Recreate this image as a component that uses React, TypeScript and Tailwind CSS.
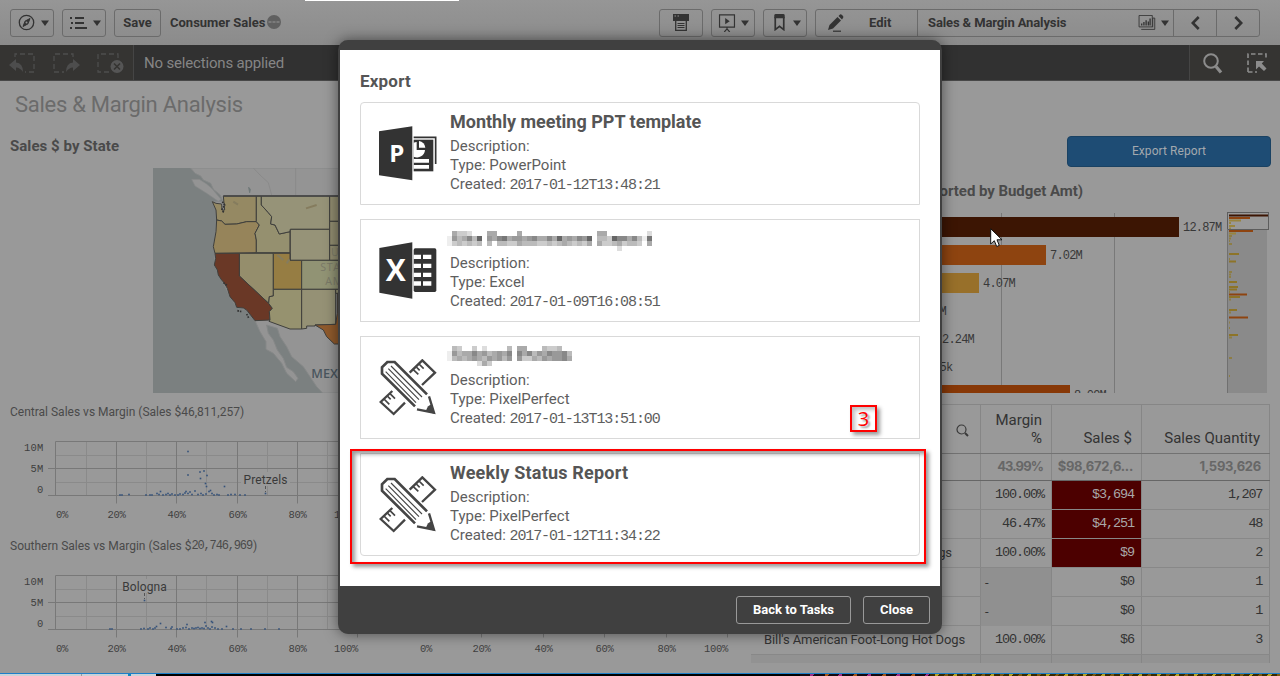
import React from "react";

const Caret = () => (
  <svg width="8" height="6" viewBox="0 0 8 6" className="shrink-0">
    <path d="M0 0.5H8L4 6Z" fill="#333" />
  </svg>
);

function ToolButton({ children, className = "" }: { children: React.ReactNode; className?: string }) {
  return (
    <button className={"flex h-7 shrink-0 items-center rounded-[3px] border border-[#6b6b6b] " + className}>
      {children}
    </button>
  );
}

function Toolbar() {
  return (
    <header className="flex h-[45px] shrink-0 items-center bg-linear-to-b from-[#969696] to-[#8b8b8b] pl-[10px] text-[13px] font-bold text-[#333]">
      <ToolButton className="w-11 gap-[6px] pl-[7px]">
        <svg width="17" height="17" viewBox="0 0 17 17" fill="none" stroke="#333">
          <circle cx="8.5" cy="8.5" r="7.2" strokeWidth="1.3" />
          <path d="M12 4.5L9.9 9.9L5 12.5L7.1 7.1Z" fill="#333" />
          <circle cx="8.5" cy="8.5" r="1" fill="#909090" stroke="none" />
        </svg>
        <Caret />
      </ToolButton>
      <ToolButton className="ml-2 w-11 gap-[6px] pl-[7px]">
        <svg width="17" height="12" viewBox="0 0 17 12" fill="#333">
          <path d="M0 0h2v2H0zM5 0h9v2H5zM1 5h2v2H1zM5 5h9v2H5zM0 10h2v2H0zM5 10h12v2H5z" />
        </svg>
        <Caret />
      </ToolButton>
      <ToolButton className="ml-2 w-[47px] justify-center">
        <span>Save</span>
      </ToolButton>
      <span className="ml-[9px] whitespace-nowrap">Consumer Sales</span>
      <svg width="14" height="14" viewBox="0 0 14 14" className="-mt-[2px] ml-[2px]">
        <circle cx="7" cy="7" r="7" fill="#606060" />
        <path d="M1.500 7H12.500" stroke="#969696" strokeWidth="1.200" strokeDasharray="3 1" />
      </svg>

      <div className="ml-auto flex items-center gap-2 pr-5">
        <ToolButton className="w-11 justify-center">
          <svg width="16" height="17" viewBox="0 0 16 17" fill="#333">
            <path d="M0 0H16V7H0Z" />
            <path d="M1.500 2h1.500M4.500 2h1.500" stroke="#909090" />
            <path d="M2.700 7V16.300H13.300V7" fill="none" stroke="#333" strokeWidth="1.300" />
            <path d="M4.500 9.500h7M4.500 11.500h7M4.500 13.500h7" stroke="#333" />
          </svg>
        </ToolButton>
        <ToolButton className="w-11 gap-[5px] pl-[6px]">
          <svg width="18" height="18" viewBox="0 0 18 20" fill="none" stroke="#333" strokeWidth="1.300">
            <path d="M0.700 1H17.300V14.500H0.700ZM9 14.500V17M9 16.500L6 20M9 16.500L12 20" />
            <path d="M7 4.500L12 8L7 11.500Z" fill="#333" stroke="none" />
          </svg>
          <Caret />
        </ToolButton>
        <ToolButton className="w-11 gap-[8px] pl-[10px]">
          <svg width="11" height="17" viewBox="0 0 11 18" fill="none" stroke="#333">
            <path d="M1 3V16.500L5.500 13L10 16.500V3" strokeWidth="1.800" />
            <path d="M0 4.500V1.500Q0 0 1.500 0H9.500Q11 0 11 1.500V4.500Z" fill="#333" stroke="none" />
          </svg>
          <Caret />
        </ToolButton>
        <div className="flex h-7 w-[445px] items-center rounded-[3px] border border-[#6b6b6b]">
          <div className="flex h-full w-[102px] items-center border-r border-[#6b6b6b] pl-[11px]">
            <svg width="17" height="18" viewBox="0 0 17 18" fill="#333">
              <path d="M10.500 3L14 6.500L6 14.500L1 16L2.500 11Z" />
              <path d="M11.500 2L13 0.500Q14 0 15 1L16 2Q16.800 3 16 4L15 5.500Z" />
              <path d="M6 17.200h8" stroke="#333" strokeWidth="1.200" />
            </svg>
            <span className="ml-[25px]">Edit</span>
          </div>
          <div className="flex h-full w-[256px] items-center border-r border-[#6b6b6b] pl-[10px]">
            <span className="whitespace-nowrap tracking-[-0.12px]">Sales &amp; Margin Analysis</span>
            <svg width="18" height="15" viewBox="0 0 19 17" fill="none" stroke="#333" className="ml-auto">
              <path d="M0.500 0.500H15.500V13.500H0.500ZM3 16.300H18.300V3.500H16M16 3.500V14" />
              <path d="M3.500 9.500V12M6 8V12M8.500 6V12M11 7.500V12M13 4V12" strokeWidth="1.500" />
            </svg>
            <span className="mr-[4px] ml-[5px]">
              <Caret />
            </span>
          </div>
          <div className="flex h-full w-[43px] items-center justify-center border-r border-[#6b6b6b]">
            <svg width="9" height="14" viewBox="0 0 9 14" fill="none" stroke="#333" strokeWidth="2.600">
              <path d="M7.700 1L1.800 7L7.700 13" />
            </svg>
          </div>
          <div className="flex h-full flex-1 items-center justify-center">
            <svg width="9" height="14" viewBox="0 0 9 14" fill="none" stroke="#333" strokeWidth="2.600">
              <path d="M1.300 1L7.200 7L1.300 13" />
            </svg>
          </div>
        </div>
      </div>
    </header>
  );
}

function SelectionBar() {
  return (
    <div className="flex h-9 shrink-0 border-b border-[#484848] bg-[#313131]">
      <div className="flex w-[134px] items-center gap-[17px] border-r border-[#454545] bg-[#353432] pl-[9px]">
        <svg width="27" height="22" viewBox="0 0 27 22" fill="none" stroke="#4d4d4d" strokeWidth="1.300">
          <path d="M6 5V2H25V20H16" strokeDasharray="5 3" />
          <path d="M0 13L7 7V10.500Q14 11 14 20Q11 15.500 7 15.500V19Z" fill="#4d4d4d" stroke="none" />
        </svg>
        <svg width="27" height="22" viewBox="0 0 27 22" fill="none" stroke="#4d4d4d" strokeWidth="1.300">
          <path d="M20 5V2H1V20H11" strokeDasharray="5 3" />
          <path d="M27 13L20 7V10.500Q13 11 13 20Q16 15.500 20 15.500V19Z" fill="#4d4d4d" stroke="none" />
        </svg>
        <svg width="27" height="22" viewBox="0 0 27 22" fill="none" stroke="#4d4d4d" strokeWidth="1.300">
          <path d="M21 6V2H1V20H12" strokeDasharray="5 3" />
          <circle cx="20" cy="14.500" r="6.500" fill="#555" stroke="none" />
          <path d="M17 11.500L23 17.500M23 11.500L17 17.500" stroke="#353432" strokeWidth="1.600" />
        </svg>
      </div>
      <span className="ml-[10px] self-center pt-[2px] text-[15px] tracking-[-0.17px] text-[#858585]">No selections applied</span>
      <div className="ml-auto flex w-[91px] items-center border-l border-[#454545] bg-[#353432] pl-[12px]">
        <svg width="22" height="22" viewBox="0 0 22 22" fill="none" stroke="#8c8c8c">
          <circle cx="9" cy="9" r="6.800" strokeWidth="2" />
          <path d="M14 14.500L19 20.500" strokeWidth="3.200" />
        </svg>
        <svg width="20" height="20" viewBox="0 0 20 20" className="ml-[23px]" fill="none" stroke="#8c8c8c" strokeWidth="1.600">
          <path d="M1 19V1H19V7M1 19H10" strokeDasharray="4.500 2.500" />
          <path d="M9 8H17L14.800 10.500L19.500 15.500L17 18L12 13.500L9 16.500Z" fill="#8c8c8c" stroke="none" />
        </svg>
      </div>
    </div>
  );
}

const westCoast = "L228 215L220 260L225 280";
const caCoast = "L320 450L310 444L290 442L285 428L270 410L262 385L252 368L245 360L235 345L232 330L223 315L227 295Z";
const idMt = "L364 135L385 158L395 170L392 192L405 195L418 222";
const states: { id: string; d: string; fill: string }[] = [
  { id: "WA", d: "M217 125L228 130L245 132L246 150L254 150L250 108H349V185L320 185L290 192L255 193L245 183L230 180L228 150Z", fill: "#958963" },
  { id: "OR", d: "M230 180L245 183L255 193L290 192L320 185L349 185L358 195L345 220L349 240V278L225 280L220 260L228 215Z", fill: "#96845a" },
  { id: "ID", d: "M349 108H364" + idMt + "L450 215V278H349V240L345 220L358 195L349 185Z", fill: "#95906f" },
  { id: "MT", d: "M364 108" + idMt + "L450 215L451 208H569V108Z", fill: "#969378" },
  { id: "WY", d: "M451 208H569V301H451Z", fill: "#969378" },
  { id: "ND", d: "M569 108H604V184H569Z", fill: "#918d70" },
  { id: "SD", d: "M569 184H604V256H569Z", fill: "#918d70" },
  { id: "NE", d: "M569 256H604V301H569Z", fill: "#918d70" },
  { id: "NV", d: "M298 280H400V408L388 410L386 430L298 348Z", fill: "#958e6c" },
  { id: "CA", d: "M225 280H298V348L386 430L397 445L388 455L390 480L345 482" + caCoast, fill: "#6a3826" },
  { id: "UT", d: "M400 280H450V301H485V388H400Z", fill: "#967d43" },
  { id: "CO", d: "M485 301H604V388H485Z", fill: "#919374" },
  { id: "AZ", d: "M400 388H485V507H450L387 484L390 480L388 455L397 445L386 430L388 410L400 408Z", fill: "#96926f" },
  { id: "NM", d: "M485 388H587V493L525 495V498H500V505L485 507Z", fill: "#959175" },
  { id: "OK", d: "M587 388H604V400H587Z", fill: "#959175" },
  { id: "TX", d: "M592 400H604V552H583L560 530L550 510L525 495L587 493L592 460Z", fill: "#8f5a2c" },
];

function StateMap() {
  return (
    <svg width="217" height="225" viewBox="39 24 651 675" className="mt-[3px] ml-[153px] block">
      <path d="M39 24H690V699H39Z" fill="#7b8080" />
      <path
        d={
          "M152 24L165 40L182 48L190 60L212 70L220 88L240 104L250 125L217 125L228 150L230 180" +
          westCoast +
          "L223 315L245 360L270 410L290 442L320 450L345 482L360 515L378 545L378 568L400 580L425 610L440 640L467 665L474 655L460 635L440 622L430 595L412 570L400 540L385 520L380 495L412 505L420 530L440 560L455 590L490 620L510 650L530 680L548 699H690V24Z"
        }
        fill="#949494"
        stroke="#868888"
        strokeWidth="3"
      />
      <path d="M155 58L178 58L200 72L215 85L243 118L235 124L200 100L165 78Z" fill="#949494" stroke="#868888" strokeWidth="2" />
      <path d="M340 24L360 45L385 68L395 105M467 24V105" fill="none" stroke="#858585" strokeWidth="2" />
      <path d="M326 82L331 88L329 98Z" fill="#6f7878" stroke="#6f7878" strokeWidth="3" />
      {states.map((s) => (
        <path key={s.id} d={s.d} fill={s.fill} stroke="#3f3f3c" strokeWidth="3" strokeLinejoin="round" />
      ))}
      <path d="M250 108H603" stroke="#444" strokeWidth="4" />
      <path d="M247 125L254 135L246 148L252 158L246 152M250 368L262 376M292 452L304 455M320 462L326 474" stroke="#333" strokeWidth="5" fill="none" strokeDasharray="5 3" />
      <path d="M280 125L294 134M498 145L530 135M412 285L430 300M440 310L448 298" stroke="#857c5e" strokeWidth="6" />
      <g fontFamily="Open Sans, sans-serif" fontSize="32" letterSpacing="2">
        <text x="573" y="288" fill="#7a7967">U</text>
        <text x="541" y="332" fill="#7a7967">STA</text>
        <text x="556" y="376" fill="#7a7967">AM</text>
        <text x="514" y="653" fill="#4a565e" fontSize="38" fontWeight="600" letterSpacing="0">MEX</text>
      </g>
    </svg>
  );
}

type Pt = [number, number];
const centralPts: Pt[] = [
  [188, 451.5], [188, 475], [200, 472], [204, 471], [207, 475.5], [200.5, 478.5], [205.5, 483.5], [206.5, 486.5], [224.5, 486.5],
  [195, 491], [186, 491.5], [190, 492], [160.5, 491.5], [209, 491.5], [210.5, 490.5], [265.5, 493.5], [120, 495], [122, 495], [129, 494.5],
  [146, 495], [150, 495], [152, 495], [157, 493.5], [159, 494.5], [163, 495], [166, 494.5], [168, 493.5], [170, 495], [172, 494], [175, 495],
  [180, 494], [183, 494.5], [185, 493], [192, 494.5], [198, 494.5], [201, 493.5], [203, 495], [206, 494], [212, 493.5], [214, 495], [217, 494.5],
  [219, 495], [228, 495], [231, 494.5], [235, 494.5], [240, 495], [245, 495], [178, 495], [188, 493.5],
];
const southernPts: Pt[] = [
  [144.5, 466.5], [160.5, 489.5], [205, 488.5], [211.5, 487.5], [212.5, 488.5], [187, 490.5], [156.5, 492.5], [226.5, 492.5],
  [206, 492], [110, 495], [112, 495], [141, 495], [144, 494.5], [148, 495], [150, 494], [153, 495], [155, 494], [166, 493.5], [171, 494.5], [172, 493],
  [177, 495], [180, 495], [183, 494], [186, 493.5], [189, 495], [192, 494], [194, 494.5], [196, 494], [198, 493.5], [200, 494.5], [202, 494], [204, 494.5],
  [208, 494], [210, 495], [212, 493], [215, 494], [218, 495], [222, 495], [233, 495], [241, 495], [251, 495], [265, 495], [279, 495],
];

function Scatter({ points, label, lx, ly }: { points: Pt[]; label: string; lx: number; ly: number }) {
  const w = label.length * 5.6 + 4;
  return (
    <svg width="370" height="96" viewBox="0 431 370 96" className="block">
      <g stroke="#8a8a8a">
        {[86.5, 146.5, 206.5, 267.5, 327.5].map((x) => (
          <path key={x} d={`M${x} 441V495`} />
        ))}
        <path d="M55 455.500H357M55 482.500H357" />
      </g>
      <g stroke="#787878" fill="none">
        {[116.5, 176.5, 237.5, 297.5, 357.5].map((x) => (
          <path key={x} d={`M${x} 441V503.500`} />
        ))}
        <path d="M55.500 495V441.500H357M48 468.500H357M48 495.500H357" />
      </g>
      {points.map(([x, y], i) => (
        <rect key={i} x={x - 0.8} y={y - 0.8} width="1.6" height="1.6" fill="#34527a" />
      ))}
      <rect x={lx - w / 2} y={ly - 8} width={w} height="14" fill="#999" />
      <path d={`M${lx} ${ly + 6}V${ly + 12}`} stroke="#555" strokeDasharray="3 2" />
      <text x={lx} y={ly + 3.8} textAnchor="middle" fontSize="12" letterSpacing="0.1" fill="#3a3a3a">
        {label}
      </text>
      <g fontFamily="Liberation Mono, monospace" fontSize="10.500" fill="#3f3f3f" letterSpacing="0.2">
        <text x="43.500" y="451" textAnchor="end">10M</text>
        <text x="43.500" y="472" textAnchor="end">5M</text>
        <text x="43.500" y="493" textAnchor="end">0</text>
        {["0%", "20%", "40%", "60%", "80%", "100%"].map((t, i) => (
          <text key={t} x={[62, 116.5, 176.5, 237.5, 297.5, 346][i]} y="517.600" textAnchor="middle" letterSpacing="-0.3">
            {t}
          </text>
        ))}
      </g>
    </svg>
  );
}

function LeftColumn() {
  return (
    <section className="flex w-[370px] shrink-0 flex-col">
      <h1 className="flex h-[46px] items-center pl-[15px] text-[22px] tracking-[-0.27px] text-[#6b6b6b]">Sales &amp; Margin Analysis</h1>
      <h2 className="flex h-[38px] items-center pl-[10px] text-[15px] font-bold tracking-[0.05px] text-[#4a4a4a]">Sales $ by State</h2>
      <StateMap />
      <h3 className="flex h-[38px] items-center pl-[10px] text-[12px] text-[#4a4a4a]">Central Sales vs Margin (Sales $46,811,257)</h3>
      <Scatter points={centralPts} label="Pretzels" lx={265.5} ly={480} />
      <h3 className="flex h-[38px] items-center pl-[10px] text-[12px] text-[#4a4a4a]">
        <span>Southern Sales vs Margin (Sales $</span>
        <span className="font-['Liberation_Mono'] tracking-[-1.15px]">20,746,969</span>
        <span className="ml-px">)</span>
      </h3>
      <Scatter points={southernPts} label="Bologna" lx={144.5} ly={453} />
    </section>
  );
}

function MiddleColumn() {
  const ticks = [481.5, 543.5, 604.5, 666.5, 727.5];
  return (
    <section className="flex w-[381px] shrink-0 flex-col justify-end pb-3">
      <svg width="381" height="36" viewBox="370 625 381 36" className="block">
        <path d="M418 629.500H728" stroke="#787878" />
        {ticks.map((x) => (
          <path key={x} d={`M${x} 629V637.500`} stroke="#787878" />
        ))}
        <g fontFamily="Liberation Mono, monospace" fontSize="10.500" fill="#3f3f3f" textAnchor="middle" letterSpacing="-0.3">
          {["0%", "20%", "40%", "60%", "80%", "100%"].map((t, i) => (
            <text key={t} x={[426, 481.5, 543.5, 604.5, 666.5, 716][i]} y="651.600">
              {t}
            </text>
          ))}
        </g>
      </svg>
    </section>
  );
}

const bars = [
  { y: 217, end: 1179, fill: "#3c1503", label: "12.87M", lx: 1183 },
  { y: 245, end: 1046, fill: "#8e4410", label: "7.02M", lx: 1050 },
  { y: 273, end: 979, fill: "#98702a", label: "4.07M", lx: 983 },
  { y: 301, end: 910, fill: "#99875a", label: "1.24M", lx: 914 },
  { y: 329, end: 938, fill: "#99875a", label: "2.24M", lx: 942 },
  { y: 357, end: 909, fill: "#99875a", label: "975.5k", lx: 914 },
  { y: 385, end: 1070, fill: "#873807", label: "8.09M", lx: 1074 },
];
const mini: [number, number, string][] = [
  [214.5, 39, "#3c1503"], [217, 21, "#8e4410"], [219.5, 12, "#98843f"], [222, 2, "#98843f"], [225, 6, "#98843f"], [227.5, 2, "#98843f"],
  [230, 24, "#8e4410"], [232.5, 7, "#98843f"], [235, 3, "#8d7d45"], [237.5, 2, "#8d7d45"], [240, 1, "#8d7d45"], [243, 3, "#8d7d45"],
  [253, 10, "#8d7428"], [258, 1, "#8d7d45"], [260.5, 7, "#8d7428"], [271, 3, "#8d7d45"], [273.5, 2, "#8d7d45"], [276, 2, "#8d7d45"],
  [281, 8, "#8d7428"], [286, 9, "#8d7428"], [288.5, 8, "#8d7428"], [291, 1, "#8d7d45"], [293.5, 18, "#8e4410"], [296, 11, "#8d7428"], [298.5, 2, "#8d7d45"],
  [309, 8, "#8d7428"], [311.5, 2, "#8d7d45"], [316.5, 19, "#8e4410"], [321.5, 1, "#8d7d45"], [327, 1, "#8d7d45"], [334, 9, "#8d7428"],
  [336.5, 3, "#8d7d45"], [357, 3, "#8d7d45"], [375, 1, "#8d7d45"],
];

function BarChart() {
  return (
    <svg width="529" height="181" viewBox="751 212 529 181" className="block">
      <path d="M1001.500 213V393M1114.500 213V393" stroke="#797979" />
      {bars.map((b) => (
        <g key={b.label}>
          <rect x="887" y={b.y} width={b.end - 887} height="20" fill={b.fill} />
          <text x={b.lx} y={b.y + 14} fontFamily="Liberation Mono, monospace" fontSize="12" letterSpacing="-0.8" fill="#383838">
            {b.label}
          </text>
        </g>
      ))}
      <rect x="1228" y="213" width="39" height="180" fill="#8a8a8a" />
      <rect x="1227.500" y="212.500" width="41" height="17" fill="#999" />
      {mini.map(([y, w, fill]) => (
        <rect key={y} x="1229" y={y} width={w} height="2" fill={fill} />
      ))}
      <rect x="1227.500" y="212.500" width="41" height="17" fill="none" stroke="#5d5d5d" />
      <path d="M1227.500 229V393" stroke="#707070" />
    </svg>
  );
}

const rows: { name: string; right?: boolean; margin: string; sales: string; qty: string; low?: boolean }[] = [
  { name: "", margin: "100.00%", sales: "$3,694", qty: "1,207", low: true },
  { name: "", margin: "46.47%", sales: "$4,251", qty: "48", low: true },
  { name: "American Foot-Long Hot Dogs", right: true, margin: "100.00%", sales: "$9", qty: "2", low: true },
  { name: "", margin: "-", sales: "$0", qty: "1" },
  { name: "", margin: "-", sales: "$0", qty: "1" },
  { name: "Bill's American Foot-Long Hot Dogs", margin: "100.00%", sales: "$6", qty: "3" },
];
const cols = "grid grid-cols-[230px_71px_90px_128px] ";
const cell = "flex items-center border-r border-[#868686] ";
const num = "justify-end pr-[7px] font-['Liberation_Mono'] text-[13.5px] ";

function DataTable() {
  return (
    <div className="mt-[11px] w-[519px] border-t border-[#868686] text-[13px] text-[#333]">
      <div className={cols + "h-[49px] border-b border-[#727272] text-[15px] leading-[18px]"}>
        <div className={cell + "justify-end pr-[11px]"}>
          <svg width="13" height="13" viewBox="0 0 13 13" fill="none" stroke="#3a3a3a" className="mt-[3px]">
            <circle cx="5.500" cy="5.500" r="4.500" strokeWidth="1.200" />
            <path d="M9 9L12 12" strokeWidth="2" />
          </svg>
        </div>
        <div className="flex items-end justify-end border-r border-[#868686] pr-[9px] pb-[6px] text-right">
          <span>Margin %</span>
        </div>
        <div className="flex items-end justify-end border-r border-[#868686] pr-[9px] pb-[6px]">Sales $</div>
        <div className="flex items-end justify-end border-r border-[#868686] pr-[9px] pb-[6px]">Sales Quantity</div>
      </div>
      <div className={cols + "h-[27px] border-b border-[#666] font-['Inter'] font-bold tracking-[-0.25px] text-[#676767]"}>
        <div className={cell} />
        <div className={cell + "justify-end pr-[8px] tracking-[-0.9px]"}>43.99%</div>
        <div className={cell + "justify-end pr-[8px]"}>$98,672,6...</div>
        <div className={cell + "justify-end pr-[8px]"}>1,593,626</div>
      </div>
      {rows.map((r, i) => (
        <div key={i} className={cols + "h-[29px] border-b border-[#888]"}>
          <div className={cell + (r.right ? "justify-end pr-[28px]" : "pl-[13px]") + " whitespace-nowrap tracking-[-0.08px]"}>{r.name}</div>
          <div className={cell + (r.margin === "-" ? "-mb-px bg-[#909090] pl-1" : num + "tracking-[-1.1px]")}>{r.margin}</div>
          <div className={cell + num + "tracking-[-1.1px] " + (r.low ? "bg-[#4c0000] text-[#a8a8a8]" : "")}>{r.sales}</div>
          <div className={cell + num + "tracking-[-1.3px]"}>{r.qty}</div>
        </div>
      ))}
      <div className={cols + "h-[8px] bg-[#929292]"}>
        <div className={cell} />
        <div className={cell} />
        <div className={cell} />
        <div className={cell} />
      </div>
    </div>
  );
}

function RightColumn() {
  return (
    <section className="flex flex-1 flex-col">
      <button className="mt-[55px] mr-[9px] h-[31px] w-[204px] self-end rounded-[4px] border border-[#1a4263] bg-[#1e4c74] pb-[2px] text-[12px] tracking-[0.07px] text-[#a3a9ae]">
        Export Report
      </button>
      <h2 className="flex h-[45px] w-[332px] items-center justify-end pt-[3px] text-[15px] font-bold tracking-[-0.05px] whitespace-nowrap text-[#4a4a4a]">
        Margin by Item (Sorted by Budget Amt)
      </h2>
      <BarChart />
      <DataTable />
    </section>
  );
}

function PowerPointIcon() {
  return (
    <svg width="58" height="55" viewBox="118 256 174 165">
      <path d="M118 272L218 257V419L118 404Z" fill="#333" />
      <path d="M222 290H288V370" fill="none" stroke="#333" strokeWidth="5" />
      <path d="M222 297H281V392H222Z" fill="#333" />
      <path d="M222 306A24 24 0 0 1 231 304V328H256A24 24 0 0 1 222 348Z" fill="#fff" />
      <path d="M238 301A21 21 0 0 1 257 321H238Z" fill="#fff" />
      <path d="M222 355H268V366H222ZM222 373H268V384H222Z" fill="#fff" />
      <text x="149" y="364" fontFamily="Open Sans, sans-serif" fontWeight="700" fontSize="72" fill="#fff">P</text>
    </svg>
  );
}

function ExcelIcon() {
  return (
    <svg width="58" height="57" viewBox="118 95 174 171">
      <path d="M119 113L218 96V265L119 247Z" fill="#333" />
      <rect x="222" y="114" width="68" height="131" rx="5" fill="#333" />
      {[133, 160, 187, 213].map((y) => (
        <path key={y} d={`M222 ${y}H244V${y + 13}H222ZM250 ${y}H275V${y + 13}H250Z`} fill="#fff" />
      ))}
      <text x="138" y="213" fontFamily="Open Sans, sans-serif" fontWeight="700" fontSize="92" textLength="60" lengthAdjust="spacingAndGlyphs" fill="#fff">X</text>
    </svg>
  );
}

function PixelPerfectIcon() {
  return (
    <svg width="58" height="58" viewBox="118 446 174 174" fill="none" stroke="#454545">
      <g strokeWidth="7">
        <path d="M210 487L248 450L286 487L247 524" />
        <path d="M158 542L123 575L162 611L196 577" />
      </g>
      <path d="M220 477L236 492M230 470L240 480M238 461L252 475M133 566L149 582M143 557L153 567M151 550L166 565" strokeWidth="5" />
      <path d="M262 552L165 455H143L127 471V490L226 588" strokeWidth="8" />
      <path d="M154 467L247 560M146 475L238 568M138 484L229 577" strokeWidth="3.500" />
      <path d="M268 558L283 607L232 597" strokeWidth="7" />
      <path d="M285 610L277 582Q264 584 258 603Z" fill="#454545" stroke="none" />
    </svg>
  );
}

const mosaicA = [
  "faccd...aaf..faf..............aaf.......d.",
  "e9ba8b6f9a87a99a98aa8a6a9a896fbbc688a8be7f",
  "ecbcbcbfbfbbccabbbccbcbabcbcafaccbacbbcfaf",
  "..................................d.......",
];
const mosaicB = [
  "fbc..c.d....b.aaf..bccb..",
  "e9baa8a9ba9a8f8a8b9a8998b",
  "ebaba9ab9a9b9f9ccab9a998a",
  "......dac................",
];

function Mosaic({ data, className }: { data: string[]; className: string }) {
  return (
    <svg width="220" height="20" viewBox="0 0 220 20" className={"-ml-[3px] block shrink-0 " + className} shapeRendering="crispEdges">
      {data.flatMap((line, r) =>
        line.split("").map((ch, c) => (ch === "." ? null : <rect key={r + "-" + c} x={c * 5} y={r * 5} width="5" height="5" fill={"#" + ch + ch + ch} />)),
      )}
    </svg>
  );
}

interface Report {
  icon: React.ReactNode;
  title: React.ReactNode;
  type: string;
  created: string;
}
const reports: Report[] = [
  { icon: <PowerPointIcon />, title: "Monthly meeting PPT template", type: "PowerPoint", created: "2017-01-12T13:48:21" },
  { icon: <ExcelIcon />, title: <Mosaic data={mosaicA} className="mt-[6px]" />, type: "Excel", created: "2017-01-09T16:08:51" },
  { icon: <PixelPerfectIcon />, title: <Mosaic data={mosaicB} className="mt-[2px]" />, type: "PixelPerfect", created: "2017-01-13T13:51:00" },
  { icon: <PixelPerfectIcon />, title: <span className="tracking-[0.2px]">Weekly Status Report</span>, type: "PixelPerfect", created: "2017-01-12T11:34:22" },
];

function ReportCard({ report }: { report: Report }) {
  return (
    <li className="flex h-[103px] border border-[#d9d9d9] bg-white first:rounded-t-[4px] last:rounded-b-[4px]">
      <div className="flex w-[89px] items-center pl-[18px]">{report.icon}</div>
      <div className="pt-[7px] text-[15px] text-[#5e5e5e]">
        <div className="flex h-[27px] items-center pb-[5px] text-[18px] font-bold text-[#555]">{report.title}</div>
        <p className="h-[19px] leading-[19px]">Description:</p>
        <p className="h-[19px] leading-[19px]">Type: {report.type}</p>
        <p className="h-[19px] leading-[19px]">
          Created: <span className="font-['Liberation_Mono'] tracking-[-1.1px]">{report.created}</span>
        </p>
      </div>
    </li>
  );
}

function ExportDialog() {
  return (
    <div
      role="dialog"
      className="absolute top-10 left-[338px] flex h-[594px] w-[604px] flex-col rounded-[10px] border-x-2 border-[#404040] bg-[#404040] shadow-[0_0_14px_rgba(0,0,0,0.5)]"
    >
      <div className="mt-[10px] h-[536px] bg-white px-5 pt-[21px]">
        <h2 className="flex h-[22px] items-center text-[17px] font-bold tracking-[0.2px] text-[#555]">Export</h2>
        <ul className="mt-[9px] flex flex-col gap-[14px]">
          {reports.map((r) => (
            <ReportCard key={r.created} report={r} />
          ))}
        </ul>
      </div>
      <div className="flex h-12 items-center justify-end gap-3 pr-[10px] text-[13px] font-bold text-white">
        <button className="h-7 w-[115px] rounded-[3px] border border-[#999]">Back to Tasks</button>
        <button className="h-7 w-[67px] rounded-[3px] border border-[#999]">Close</button>
      </div>
    </div>
  );
}

function Annotations() {
  return (
    <>
      <div className="absolute top-[449px] left-[350px] h-[115px] w-[576px] border-2 border-[#f00] shadow-[3px_3px_4px_rgba(0,0,0,0.4),inset_3px_3px_4px_rgba(0,0,0,0.4)]" />
      <div className="absolute top-[405px] left-[850px] flex h-[27px] w-[27px] items-center justify-center border-2 border-[#f00] font-['Open_Sans'] text-[20px] leading-none text-[#f00] shadow-[3px_3px_4px_rgba(0,0,0,0.4),inset_3px_3px_4px_rgba(0,0,0,0.25)] [text-shadow:2px_2px_2px_rgba(0,0,0,0.4)]">
        3
      </div>
      <svg width="14" height="21" viewBox="0 0 14 21" className="absolute top-[228px] left-[990px]">
        <path d="M0.700 0.700V16L4.300 12.700L6.700 18.500L9.300 17.400L7 11.800H12Z" fill="#fff" stroke="#111" />
      </svg>
    </>
  );
}

export default function App() {
  return (
    <div className="relative flex h-[676px] w-[1280px] flex-col overflow-hidden bg-[#999] font-['Roboto',sans-serif]">
      <div className="absolute top-0 left-[305px] h-px w-[154px] bg-white" />
      <Toolbar />
      <SelectionBar />
      <main className="flex h-[592px] shrink-0 overflow-hidden">
        <LeftColumn />
        <MiddleColumn />
        <RightColumn />
      </main>
      <footer className="flex h-[3px] shrink-0 border-t border-[#1c7fc9] bg-black">
        <div className="flex w-[156px] justify-between bg-[#c9d2d8] pr-[25px] pl-[81px]">
          <span className="w-px bg-[#999]" />
          <span className="w-[3px] bg-[#0f85c0]" />
        </div>
        <div className="ml-auto w-[130px] bg-[repeating-linear-gradient(120deg,#150a10_0_9px,#a0308a_9px_12px,#150a10_12px_22px,#a5561a_22px_25px)]" />
        <div className="w-[350px] bg-[repeating-linear-gradient(120deg,#3a2c00_0_5px,#b5a326_5px_8px,#3a2a00_8px_13px,#7c5a10_13px_16px)]" />
      </footer>
      <ExportDialog />
      <Annotations />
    </div>
  );
}
